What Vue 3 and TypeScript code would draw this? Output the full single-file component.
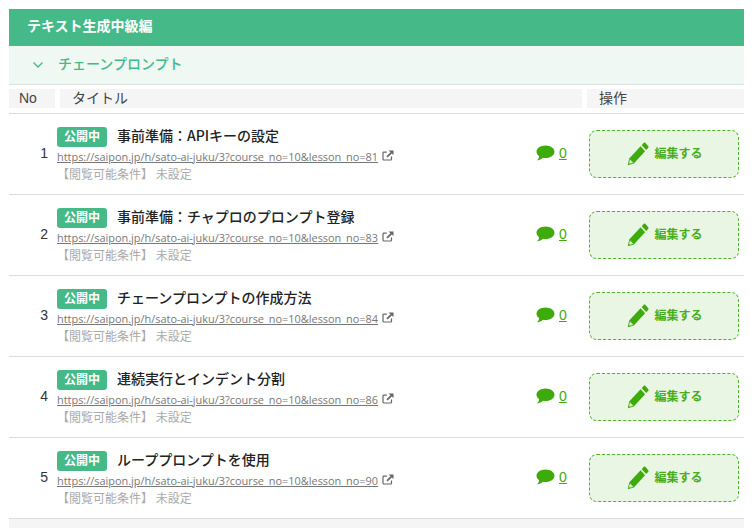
<script setup lang="ts">
interface Lesson { no: number; title: string; lesson: number }
const lessons: Lesson[] = [
  { no: 1, title: '事前準備：APIキーの設定', lesson: 81 },
  { no: 2, title: '事前準備：チャプロのプロンプト登録', lesson: 83 },
  { no: 3, title: 'チェーンプロンプトの作成方法', lesson: 84 },
  { no: 4, title: '連続実行とインデント分割', lesson: 86 },
  { no: 5, title: 'ループプロンプトを使用', lesson: 90 },
]
</script>

<template>
  <div class="page">
    <div class="head">テキスト生成中級編</div>
    <div class="sub">
      <svg class="chev" width="12" height="8" viewBox="0 0 12 8"><path d="M1.5 1.5 6 6l4.5-4.5" fill="none" stroke="#45ba88" stroke-width="1.4"/></svg>
      <span>チェーンプロンプト</span>
    </div>
    <div class="cols">
      <div class="c-no">No</div>
      <div class="c-title">タイトル</div>
      <div class="c-op">操作</div>
    </div>
    <div v-for="l in lessons" :key="l.no" class="row">
      <div class="num">{{ l.no }}</div>
      <div class="info">
        <div class="line1"><span class="badge">公開中</span><span class="title">{{ l.title }}</span></div>
        <div class="line2">
          <a class="url">https://saipon.jp/h/sato-ai-juku/3?course_no=10&amp;lesson_no={{ l.lesson }}</a>
          <svg class="ext" width="12" height="11" viewBox="0 0 12 11"><path d="M9.500 6.500v2.700a.8.8 0 0 1-.8.8H1.800a.8.8 0 0 1-.8-.8V3a.8.8 0 0 1 .8-.8h3" fill="none" stroke="#666" stroke-width="1.200"/><path d="M6.500 0.500h5v4.600L9.800 3.500 5.600 7.400 4.400 6.200 8.500 2.200z" fill="#666"/></svg>
        </div>
        <div class="line3">【閲覧可能条件】 未設定</div>
      </div>
      <div class="comment">
        <svg width="19" height="16" viewBox="0 0 19 16"><path d="M9.500 0.500c5 0 9 2.800 9 6.300s-4 6.300-9 6.300c-.9 0-1.800-.1-2.600-.3C5.600 14 3.600 15.300.9 15.500c1.300-1.300 2.200-2.800 2.300-4.300C1.500 10 .5 8.500.5 6.800.5 3.300 4.500.5 9.500.5z" fill="#3cab0b"/></svg>
        <a class="count">0</a>
      </div>
      <div class="op">
        <div class="edit">
          <svg width="22" height="24" viewBox="0 0 22 22" preserveAspectRatio="none"><path d="M16.800 .8c.5-.4 1.100-.4 1.500 0l3 3c.4.4.4 1 0 1.500l-2.100 2.100-4.500-4.500zM13.600 4l4.500 4.500L6.800 19.800.8 21.200l1.400-6z" fill="#3cab0b"/><path d="M2.900 15.700l3.400 3.400-3.500.8-.7-.7z" fill="#d8efcc"/></svg>
          <span>編集する</span>
        </div>
      </div>
    </div>
    <div class="foot"></div>
  </div>
</template>

<style scoped>
.page {
  width: 744px;
  height: 528px;
  box-sizing: border-box;
  padding: 9px 0 0 9px;
  overflow: hidden;
  background: #fff;
  font-family: "Noto Sans CJK JP", "Liberation Sans", sans-serif;
  color: #333;
}
.head {
  height: 37px;
  line-height: 33px;
  padding-left: 18px;
  background: #45ba88;
  color: #fff;
  font-size: 14px;
  font-weight: 700;
}
.sub {
  height: 38px;
  display: flex;
  align-items: center;
  padding-left: 23px;
  gap: 14px;
  background: #eff8f3;
  border-bottom: 1px solid #dde3e0;
  color: #45ba88;
  font-size: 14px;
  font-weight: 500;
}
.sub span { margin-bottom: 4px; }
.chev { margin-bottom: 1px; }
.cols {
  display: grid;
  grid-template-columns: 46px 522px 1fr;
  gap: 5px;
  padding-top: 4px;
  height: 29px;
  box-sizing: border-box;
  border-bottom: 1px solid #ddd;
  font-size: 14px;
  line-height: 17px;
  color: #444;
}
.cols > div { background: #f5f5f5; height: 19px; }
.c-no { padding-left: 10px; font-family: "Liberation Sans", sans-serif; line-height: 19px; }
.c-title { padding-left: 12px; }
.c-op { padding-left: 12px; }
.row {
  height: 81px;
  box-sizing: border-box;
  border-bottom: 1px solid #ddd;
  display: flex;
  align-items: flex-start;
}
.num {
  width: 48px;
  box-sizing: border-box;
  padding: 31px 9px 0 0;
  text-align: right;
  font-size: 14px;
  line-height: 16px;
  font-family: "Liberation Sans", sans-serif;
}
.info { width: 472px; padding-top: 13px; }
.line1 { display: flex; align-items: center; height: 20px; }
.badge {
  width: 50px;
  height: 20px;
  border-radius: 3px;
  background: #45ba88;
  color: #fff;
  font-size: 12px;
  font-weight: 700;
  line-height: 18px;
  text-align: center;
}
.title {
  margin: 0 0 4px 10px;
  font-size: 14px;
  font-weight: 500;
  color: #222;
}
.line2 {
  display: flex;
  align-items: center;
  gap: 4px;
  height: 17px;
  margin-top: 1px;
}
.url {
  font-family: "Open Sans", "Liberation Sans", sans-serif;
  font-size: 10.93px;
  color: #777;
  text-decoration: underline;
  white-space: nowrap;
}
.ext { flex: none; margin-top: -3px; }
.line3 {
  font-size: 12px;
  line-height: 17px;
  color: #aaa;
}
.comment {
  width: 60px;
  padding-top: 31px;
  padding-left: 7px;
  box-sizing: border-box;
  display: flex;
  align-items: center;
  gap: 4px;
}
.count {
  font-family: "Liberation Sans", sans-serif;
  font-size: 14px;
  color: #3cab0b;
  text-decoration: underline;
}
.op { padding: 16px 0 0 0; }
.edit {
  width: 150px;
  height: 48px;
  box-sizing: border-box;
  border: 1px dashed #4fb32a;
  border-radius: 8px;
  background: #eaf6e4;
  display: flex;
  align-items: center;
  justify-content: center;
  gap: 5px;
  color: #45ae20;
  font-size: 12px;
  font-weight: 700;
}
.edit svg { margin-left: 2px; }
.edit span { margin-bottom: 3px; }
.foot { height: 10px; background: #f5f5f5; }
</style>
